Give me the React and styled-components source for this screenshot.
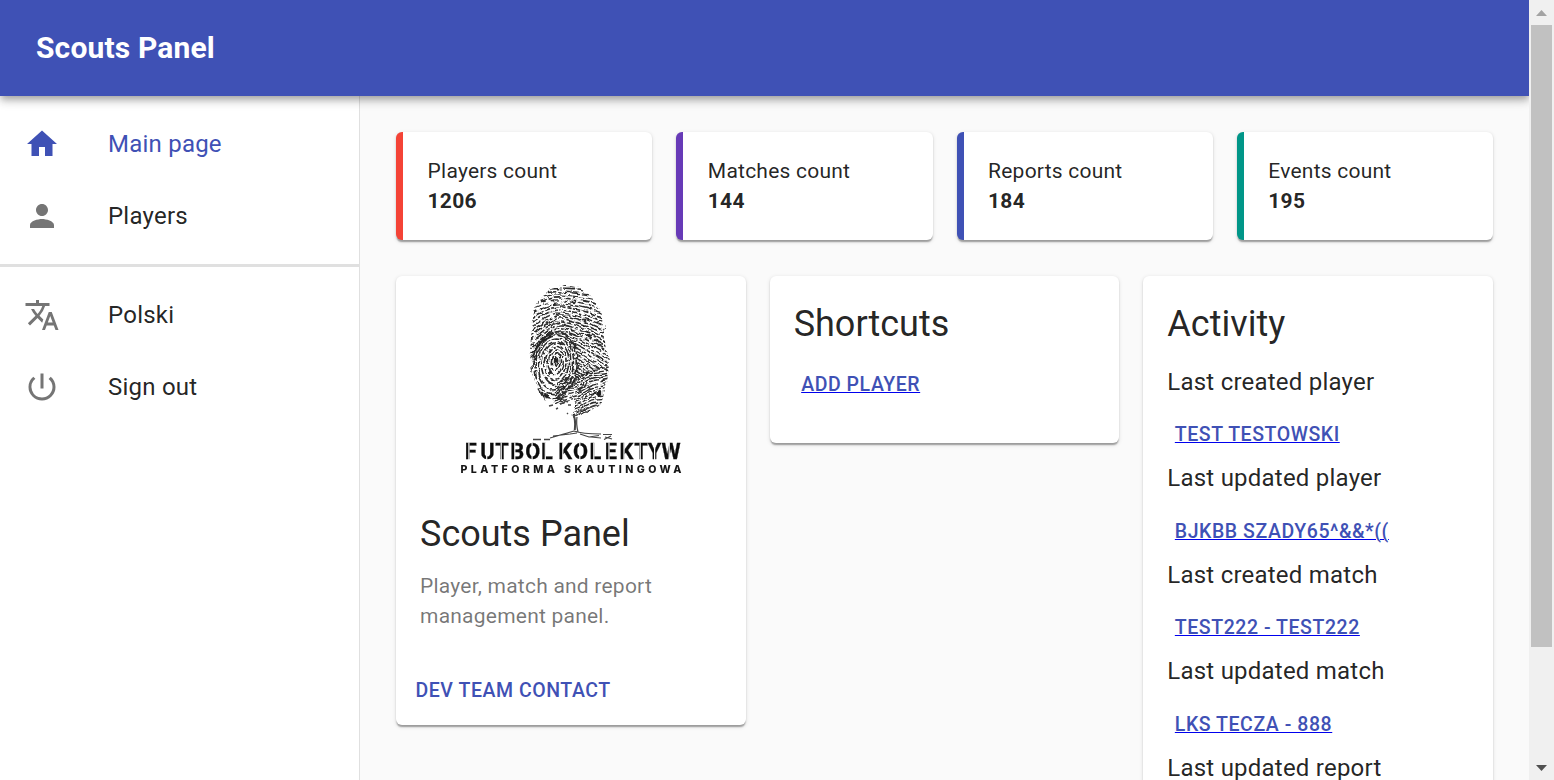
import React from "react";
import styled, { createGlobalStyle } from "styled-components";
import { MdHome, MdPerson, MdTranslate, MdPowerSettingsNew } from "react-icons/md";

const GlobalStyle = createGlobalStyle`
  *, *::before, *::after { box-sizing: border-box; }
  html, body { margin: 0; height: 100%; overflow: hidden; }
  body { background: #fafafa; color: rgba(0, 0, 0, 0.87); font-family: Roboto, "Liberation Sans", sans-serif; }
`;

const Window = styled.div`
  display: flex;
  height: 780px;
  overflow: hidden;
`;

const Page = styled.div`
  flex: 1;
  min-width: 0;
  display: flex;
  flex-direction: column;
  overflow: hidden;
`;

const AppBar = styled.header`
  position: relative;
  z-index: 2;
  flex: none;
  height: 96px;
  padding: 0 36px;
  display: flex;
  align-items: center;
  background: #3f51b5;
  color: #fff;
  box-shadow: 0 3px 6px -1.5px rgba(0, 0, 0, 0.2), 0 6px 7.5px rgba(0, 0, 0, 0.14), 0 1.5px 15px rgba(0, 0, 0, 0.12);
`;

const AppTitle = styled.h1`
  margin: 0;
  font-size: 30px;
  line-height: 48px;
  font-weight: 700;
  letter-spacing: 0.005em;
`;

const Body = styled.div`
  flex: 1;
  min-height: 0;
  display: flex;
`;

const Sidebar = styled.nav`
  flex: none;
  width: 360px;
  background: #fff;
  border-right: 1px solid #e0e0e0;
`;

const NavList = styled.ul`
  list-style: none;
  margin: 0;
  padding: 12px 0;
`;

const NavItem = styled.li`
  display: flex;
  align-items: center;
  height: 72px;
  padding: 0 24px;
  font-size: 24px;
  line-height: 36px;
  letter-spacing: 0.00938em;
  color: ${(p) => (p.$active ? "#3f51b5" : "rgba(0, 0, 0, 0.87)")};

  svg {
    flex: none;
    width: 36px;
    height: 36px;
    margin-right: 48px;
    color: ${(p) => (p.$active ? "#3f51b5" : "#757575")};
  }
`;

const Divider = styled.hr`
  margin: 0;
  border: 0;
  height: 3px;
  background: #e0e0e0;
`;

const Content = styled.main`
  flex: 1;
  min-width: 0;
  padding: 36px;
  display: flex;
  flex-direction: column;
  gap: 36px;
`;

const Grid = styled.div`
  display: grid;
  grid-template-columns: repeat(${(p) => p.$columns}, minmax(0, 1fr));
  column-gap: 24px;
  align-items: start;
`;

const Card = styled.section`
  background: #fff;
  border-radius: 6px;
  overflow: hidden;
  box-shadow: 0 3px 1.5px -1.5px rgba(0, 0, 0, 0.2), 0 1.5px 1.5px rgba(0, 0, 0, 0.14), 0 1.5px 4.5px rgba(0, 0, 0, 0.12);
`;

const StatCard = styled(Card)`
  border-left: 7px solid ${(p) => p.$accent};
  padding: 24px 24px 24px 24.6px;
  font-size: 21px;
  line-height: 30px;
  letter-spacing: 0.01071em;
`;

const StatLabel = styled.div``;

const StatValue = styled.div`
  font-weight: 700;
`;

const CardContent = styled.div`
  padding: 24px 24px ${(p) => (p.$last ? "36px" : "24px")};
`;

const CardTitle = styled.h2`
  margin: 0 0 12.6px;
  font-size: 36px;
  line-height: 48px;
  font-weight: 400;
`;

const Description = styled.p`
  margin: 0;
  font-size: 21px;
  line-height: 30px;
  letter-spacing: 0.01071em;
  color: rgba(0, 0, 0, 0.54);
`;

const CardActions = styled.div`
  display: flex;
  padding: 12px;
`;

const Button = styled.span`
  display: block;
  width: fit-content;
  padding: 7px 7.5px 5px;
  font-size: 19.5px;
  line-height: 34.125px;
  font-weight: 500;
  letter-spacing: 0.02857em;
  text-transform: uppercase;
  white-space: nowrap;
  color: #3f51b5;
`;

const LinkButton = styled(Button)`
  text-decoration: underline;
  text-decoration-color: #0000ee;
  text-decoration-thickness: 1px;
`;

const ActivityItem = styled.div`
  height: 96.5px;
  padding-top: 3.4px;
`;

const ActivityLabel = styled.p`
  margin: 0 0 11.5px;
  font-size: 24px;
  line-height: 36px;
  letter-spacing: 0.00938em;
`;

const Media = styled.div`
  height: 210px;
  display: flex;
  justify-content: center;

  svg { display: block; }
`;

const ScrollTrack = styled.div`
  flex: none;
  width: 25px;
  background: #f0f0f0;
  display: flex;
  flex-direction: column;
  align-items: center;
`;

const ScrollButton = styled.div`
  height: 25px;
  display: flex;
  align-items: center;
  svg { display: block; }
`;

const ScrollThumb = styled.div`
  width: 21px;
  height: 622px;
  margin-bottom: auto;
  background: #c1c1c1;
`;

/* Deterministic noise so that the ridges are always broken in the same places. */
const noise = (n) => {
  const s = Math.sin(n * 127.1 + 11.7) * 43758.5453;
  return s - Math.floor(s);
};
const dash = (n) =>
  [0, 1, 2, 3, 4, 5].map((k) => (k % 2 ? 0.8 + noise(n * 9 + k) * 1.4 : 3 + noise(n * 7 + k) * 12).toFixed(1)).join(" ");

const arches = Array.from({ length: 33 }, (_, i) => {
  const y = 9 + i * 3;
  const left = y + 5 + i * 1.5;
  const right = y + 7 + i * 0.95;
  return `M94 ${left}C108 ${left - 4 - i * 0.4} 118 ${y} 131 ${y + 1}S166 ${right - 6} 184 ${right + 4}`;
});

const roots = Array.from({ length: 14 }, (_, i) => {
  const y = 99 + i * 3;
  return `M124 ${y + 11}C136 ${y + 2} 143 ${y + 6} 153 ${y - 1}S170 ${y - 5} 182 ${y - 9}`;
});

const specks = Array.from({ length: 90 }, (_, i) => ({
  x: 100 + noise(i + 3) * 76,
  y: 12 + noise(i + 80) * 112,
  r: 0.6 + noise(i + 160) * 0.9,
  dark: i % 2 !== 0,
}));

const NAME = "FUTBOLKOLEKTYW";
const NAME_X = [33.7, 49.3, 64.2, 79.3, 94.3, 110, 127.3, 142, 158.5, 173.7, 188.5, 203.2, 216.8, 230.6];
const GAPS = [4.2, 6.4, 6, 4.5, 6.8, 4.3, 4.5, 6.8, 4.3, 4.3, 4.5, 6, 6.8, 7.6];

function Logo() {
  return (
    <svg width="280" height="210" viewBox="0 0 280 210" aria-label="Futbol Kolektyw">
      <defs>
        <clipPath id="print">
          <path d="M134 10C146 9 156 15 162 24C170 32 173 45 173 58C175 66 173 72 178 82C178 96 176 111 172 120C170 130 161 132 152 139L142 142C140 135 147 131 143 124C133 127 122 131 113 124C106 114 104 104 101 94C98 80 99 65 102 48C101 35 106 26 114 18C118 13 126 11 134 10Z" />
        </clipPath>
        <filter id="ink" x="-5%" y="-5%" width="110%" height="110%">
          <feTurbulence type="fractalNoise" baseFrequency="0.11" numOctaves="2" seed="8" result="warp" />
          <feDisplacementMap in="SourceGraphic" in2="warp" scale="6" xChannelSelector="R" yChannelSelector="G" result="ridges" />
          <feGaussianBlur in="ridges" stdDeviation="0.35" />
        </filter>
        <filter id="soft" x="-2%" y="-5%" width="104%" height="110%">
          <feGaussianBlur stdDeviation="0.35" />
        </filter>
      </defs>
      <g filter="url(#ink)">
        <g clipPath="url(#print)" fill="none" stroke="#2b2b2b">
          {arches.map((d, i) => (
            <path key={i} d={d} strokeWidth={1.1 + noise(i) * 0.6} strokeDasharray={dash(i + 1)} />
          ))}
          <ellipse cx="124" cy="90" rx="22" ry="30" transform="rotate(6 124 90)" fill="#fff" stroke="none" />
          {Array.from({ length: 8 }, (_, i) => (
            <ellipse
              key={i}
              cx={125 - i * 0.15}
              cy={85 + i * 0.6}
              rx={1.5 + i * 3}
              ry={4 + i * 4.2}
              transform="rotate(7 124 86)"
              strokeWidth={1.25 + noise(i + 7) * 0.45}
              strokeDasharray={dash(i + 40)}
            />
          ))}
          <path d="M126 128L150 101L182 88V145H124Z" fill="#fff" stroke="none" />
          {roots.map((d, i) => (
            <path key={i} d={d} strokeWidth={1.15 + noise(i + 30) * 0.5} strokeDasharray={dash(i + 70)} />
          ))}
          <path d="M101 77L110 65L119 60M103 83l6 -9M104 74l5 -6" stroke="#222" strokeWidth="2" />
          <path d="M131 9C133 24 127 38 126 55" stroke="#fff" strokeWidth="1.6" strokeDasharray="8 3" />
          {specks.map((s, i) => (
            <ellipse key={i} cx={s.x} cy={s.y} rx={s.r * 1.3} ry={s.r * 0.8} fill={s.dark ? "#333" : "#fff"} stroke="none" />
          ))}
          <g fill="#222" stroke="none">
            <circle cx="125" cy="84" r="1.8" />
            <circle cx="120" cy="97" r="2" />
            <circle cx="156" cy="97" r="1.7" />
            <circle cx="169" cy="117" r="2.3" />
            <circle cx="115" cy="119" r="2" />
            <circle cx="134" cy="112" r="1.5" />
          </g>
        </g>
      </g>
      <g fill="none" stroke="#444" strokeWidth="1.2" filter="url(#soft)">
        <path d="M118 130l4 -1M125 133l2 -1M129 128l5 -2M137 129l3 0M136 138l1 -1M132 124l5 2" strokeWidth="1.4" />
        <path d="M145 136L155 133L166 129M143 140L150 137" />
        <path d="M142.5 139C145 144 144 149 143.8 154" strokeWidth="2" />
        <path d="M146 141C145 147 146 152 147 156" strokeWidth="1.2" />
        <path d="M102 163.5H110M113 163.5H119" strokeWidth="1.5" />
        <path d="M119 162C129 159 136 157 143 155C151 158 160 158 170 158M122 160L139 158L146 157M149 158L158 161L168 159.5M160 161L170 162M172 158.5H181M174 161L181 163M173 163.5L180 160" />
      </g>
      <g filter="url(#soft)">
        <text
          x={NAME_X.join(" ")}
          y="183.2"
          fontFamily="Roboto, sans-serif"
          fontSize="21.8"
          fontWeight="700"
          fill="#111"
          stroke="#111"
          strokeWidth="0.3"
        >
          {NAME}
        </text>
        <g stroke="#fdfdfd" strokeWidth="1.2">
          {NAME_X.map((x, i) => (
            <path key={i} d={`M${x + GAPS[i]} 166.5V184.5`} />
          ))}
        </g>
        <text
          x="29.5"
          y="197.2"
          textLength="221"
          lengthAdjust="spacing"
          fontFamily="Inter, sans-serif"
          fontSize="10.6"
          fontWeight="800"
          fill="#151515"
        >
          PLATFORMA SKAUTINGOWA
        </text>
      </g>
    </svg>
  );
}

const stats = [
  { label: "Players count", value: 1206, accent: "#f44336" },
  { label: "Matches count", value: 144, accent: "#673ab7" },
  { label: "Reports count", value: 184, accent: "#3f51b5" },
  { label: "Events count", value: 195, accent: "#009688" },
];

const activity = [
  ["Last created player", "Test Testowski"],
  ["Last updated player", "BJKBB SZADY65^&&*(("],
  ["Last created match", "test222 - test222"],
  ["Last updated match", "LKS Tecza - 888"],
  ["Last updated report", ""],
];

export default function App() {
  return (
    <>
      <GlobalStyle />
      <Window>
        <Page>
          <AppBar>
            <AppTitle>Scouts Panel</AppTitle>
          </AppBar>
          <Body>
            <Sidebar>
              <NavList>
                <NavItem $active><MdHome />Main page</NavItem>
                <NavItem><MdPerson />Players</NavItem>
              </NavList>
              <Divider />
              <NavList>
                <NavItem><MdTranslate />Polski</NavItem>
                <NavItem><MdPowerSettingsNew />Sign out</NavItem>
              </NavList>
            </Sidebar>
            <Content>
              <Grid $columns={4}>
                {stats.map((s) => (
                  <StatCard key={s.label} $accent={s.accent}>
                    <StatLabel>{s.label}</StatLabel>
                    <StatValue>{s.value}</StatValue>
                  </StatCard>
                ))}
              </Grid>
              <Grid $columns={3}>
                <Card>
                  <Media><Logo /></Media>
                  <CardContent>
                    <CardTitle>Scouts Panel</CardTitle>
                    <Description>Player, match and report management panel.</Description>
                  </CardContent>
                  <CardActions>
                    <Button>Dev team contact</Button>
                  </CardActions>
                </Card>
                <Card>
                  <CardContent $last>
                    <CardTitle>Shortcuts</CardTitle>
                    <LinkButton>Add player</LinkButton>
                  </CardContent>
                </Card>
                <Card>
                  <CardContent $last>
                    <CardTitle>Activity</CardTitle>
                    {activity.map(([label, link]) => (
                      <ActivityItem key={label}>
                        <ActivityLabel>{label}</ActivityLabel>
                        {link && <LinkButton>{link}</LinkButton>}
                      </ActivityItem>
                    ))}
                  </CardContent>
                </Card>
              </Grid>
            </Content>
          </Body>
        </Page>
        <ScrollTrack>
          <ScrollButton>
            <svg width="11" height="6" viewBox="0 0 11 6"><path d="M5.5 0L11 6H0Z" fill="#a3a3a3" /></svg>
          </ScrollButton>
          <ScrollThumb />
          <ScrollButton>
            <svg width="11" height="6" viewBox="0 0 11 6"><path d="M5.5 6L11 0H0Z" fill="#505050" /></svg>
          </ScrollButton>
        </ScrollTrack>
      </Window>
    </>
  );
}
